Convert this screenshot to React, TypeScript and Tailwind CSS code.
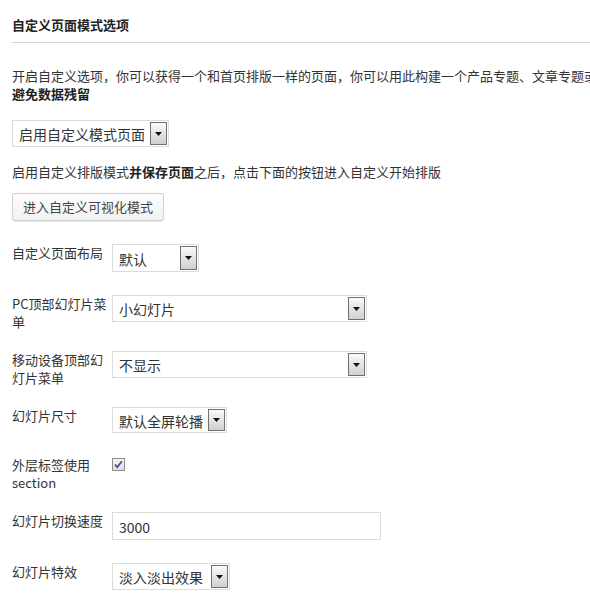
import React from 'react';

const FONT = '"Noto Sans CJK SC", "Noto Sans", sans-serif';

const SelectBox: React.FC<{ value: string; width: string; height?: string }> = ({
    value,
    width,
    height = 'h-[27px]',
}) => (
    <div
        className={`flex items-stretch justify-between border border-[#dcdcdc] bg-white p-px ${width} ${height}`}
    >
        <span className="flex items-center pl-[5px] pt-[2px] text-[14px] text-[#333] whitespace-nowrap">
            {value}
        </span>
        <span className="flex w-[17px] items-center justify-center border border-[#707070] bg-gradient-to-b from-[#fafafa] to-[#cfcfcf]">
            <svg width="7" height="4" viewBox="0 0 7 4">
                <path d="M0 0h7L3.5 4z" fill="#111" />
            </svg>
        </span>
    </div>
);

const Row: React.FC<{ label: React.ReactNode; children: React.ReactNode }> = ({
    label,
    children,
}) => (
    <div className="flex items-start">
        <div className="w-[100px] shrink-0 pb-5 text-[13px] leading-[18px] text-[#333]">
            {label}
        </div>
        <div className="pb-[23px]">{children}</div>
    </div>
);

const App: React.FC = () => {
    return (
        <div
            className="w-[590px] h-[609px] overflow-hidden bg-white pl-3"
            style={{ fontFamily: FONT }}
        >
            <div className="w-[640px]">
                <h2 className="mt-4 text-[13px] font-bold leading-[18px] text-[#222]">
                    自定义页面模式选项
                </h2>
                <div className="mt-2 border-t border-[#d4d4d4]" />

                <p className="mt-[24px] text-[13px] leading-[18px] text-[#333]">
                    <span className="block whitespace-nowrap">
                        开启自定义选项，你可以获得一个和首页排版一样的页面，你可以用此构建一个产品专题、文章专题或
                    </span>
                    <strong className="font-bold text-[#222]">避免数据残留</strong>
                </p>

                <div className="mt-[17px]">
                    <SelectBox value="启用自定义模式页面" width="w-[157px]" height="h-[27px]" />
                </div>

                <p className="mt-4 text-[13px] leading-[17px] text-[#333]">
                    启用自定义排版模式<strong className="font-bold text-[#222]">并保存页面</strong>
                    之后，点击下面的按钮进入自定义开始排版
                </p>

                <button className="mt-[13px] h-[28px] rounded-[3px] border border-[#cfcfcf] bg-gradient-to-b from-[#fefefe] to-[#f1f1f1] px-[10px] text-[13px] text-[#444] shadow-[0_1px_0_rgba(0,0,0,0.08)]">
                    进入自定义可视化模式
                </button>

                <div className="mt-[23px]">
                    <Row label="自定义页面布局">
                        <SelectBox value="默认" width="w-[87px]" height="h-[28px]" />
                    </Row>
                    <Row label="PC顶部幻灯片菜单">
                        <SelectBox value="小幻灯片" width="w-[255px]" />
                    </Row>
                    <Row label="移动设备顶部幻灯片菜单">
                        <SelectBox value="不显示" width="w-[255px]" />
                    </Row>
                    <Row label="幻灯片尺寸">
                        <SelectBox value="默认全屏轮播" width="w-[115px]" height="h-[26px]" />
                    </Row>
                    <Row label="外层标签使用 section">
                        <span className="mt-[2px] flex h-[13px] w-[13px] items-center justify-center border border-[#8e8f8f] bg-gradient-to-b from-[#f4f4f4] to-[#dedede]">
                            <svg width="9" height="9" viewBox="0 0 9 9">
                                <path
                                    d="M1 4.5l2.2 2.6L8 1.2"
                                    fill="none"
                                    stroke="#3a4f9c"
                                    strokeWidth="1.7"
                                />
                            </svg>
                        </span>
                    </Row>
                    <Row label="幻灯片切换速度">
                        <div className="flex h-[28px] w-[269px] items-center border border-[#dcdcdc] bg-white pl-[6px] pt-[2px] text-[14px] text-[#333]">
                            3000
                        </div>
                    </Row>
                    <Row label="幻灯片特效">
                        <SelectBox value="淡入淡出效果" width="w-[118px]" />
                    </Row>
                </div>
            </div>
        </div>
    );
};

export default App;
